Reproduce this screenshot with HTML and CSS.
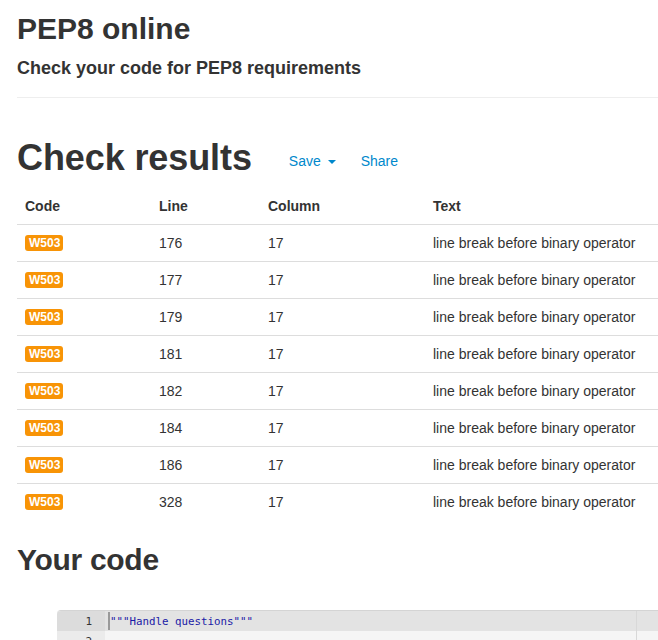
FILE: index.html
```html
<!DOCTYPE html>
<html>
<head>
<meta charset="utf-8">
<title>PEP8 online</title>
<link rel="stylesheet" href="styles.css">
</head>
<body>
<div class="page">
  <div class="page-header">
    <h1 class="title">PEP8 online</h1>
    <h2 class="subtitle">Check your code for PEP8 requirements</h2>
  </div>

  <div class="results-head">
    <h1 class="big">Check results</h1>
    <a class="action" href="#">Save <span class="caret"></span></a>
    <a class="action share" href="#">Share</a>
  </div>

  <table class="results">
    <thead>
      <tr><th class="c-code">Code</th><th class="c-line">Line</th><th class="c-col">Column</th><th>Text</th></tr>
    </thead>
    <tbody>
      <tr><td><span class="label">W503</span></td><td>176</td><td>17</td><td>line break before binary operator</td></tr>
      <tr><td><span class="label">W503</span></td><td>177</td><td>17</td><td>line break before binary operator</td></tr>
      <tr><td><span class="label">W503</span></td><td>179</td><td>17</td><td>line break before binary operator</td></tr>
      <tr><td><span class="label">W503</span></td><td>181</td><td>17</td><td>line break before binary operator</td></tr>
      <tr><td><span class="label">W503</span></td><td>182</td><td>17</td><td>line break before binary operator</td></tr>
      <tr><td><span class="label">W503</span></td><td>184</td><td>17</td><td>line break before binary operator</td></tr>
      <tr><td><span class="label">W503</span></td><td>186</td><td>17</td><td>line break before binary operator</td></tr>
      <tr><td><span class="label">W503</span></td><td>328</td><td>17</td><td>line break before binary operator</td></tr>
    </tbody>
  </table>

  <h1 class="your-code">Your code</h1>

  <div class="editor">
    <div class="ed-line active">
      <div class="gutter">1</div>
      <div class="code"><span class="cursor"></span><span class="str">"""Handle questions"""</span></div>
    </div>
    <div class="ed-line">
      <div class="gutter">2</div>
      <div class="code"></div>
    </div>
    <div class="print-margin"></div>
  </div>
</div>
</body>
</html>
```
FILE: styles.css
```css
html, body {
  margin: 0;
  padding: 0;
  overflow: hidden;
}
body {
  font-family: "Liberation Sans", Arial, sans-serif;
  font-size: 14px;
  line-height: 20px;
  color: #333;
  background: #fff;
}
.page {
  padding-left: 17px;
}
.page-header {
  padding-bottom: 19px;
  border-bottom: 1px solid #eee;
}
.title {
  margin: 12px 0 0;
  font-size: 30px;
  line-height: 33px;
  font-weight: bold;
}
.subtitle {
  margin: 13px 0 0;
  font-size: 18px;
  line-height: 20px;
  font-weight: bold;
}
.results-head {
  display: flex;
  align-items: center;
  margin-top: 40px;
}
.big {
  margin: 0;
  font-size: 36px;
  line-height: 40px;
  font-weight: bold;
  letter-spacing: -0.1px;
}
.action {
  color: #0088cc;
  text-decoration: none;
  font-size: 14px;
  margin-left: 37px;
  margin-top: 6px;
}
.action.share {
  margin-left: 25px;
}
.caret {
  display: inline-block;
  width: 0;
  height: 0;
  margin-left: 3px;
  vertical-align: middle;
  border-top: 4px solid #0088cc;
  border-left: 4px solid transparent;
  border-right: 4px solid transparent;
}
.results {
  margin-top: 10px;
  width: 100%;
  border-collapse: collapse;
  border-spacing: 0;
}
.results th, .results td {
  padding: 8px;
  line-height: 20px;
  text-align: left;
  vertical-align: top;
}
.results th {
  font-weight: bold;
  vertical-align: bottom;
}
.results td {
  border-top: 1px solid #ddd;
}
.c-code { width: 118px; }
.c-line { width: 93px; }
.c-col { width: 149px; }
.label {
  display: inline-block;
  background: #f89406;
  color: #fff;
  font-size: 12px;
  font-weight: bold;
  line-height: 16px;
  padding: 0 3px 0 4px;
  border-radius: 3px;
  vertical-align: middle;
  position: relative;
  top: -1px;
}
.your-code {
  margin: 23px 0 0;
  font-size: 30px;
  line-height: 33px;
  font-weight: bold;
  letter-spacing: -0.3px;
}
.editor {
  position: relative;
  margin: 34px 0 0 40px;
  border-top: 1px solid #d4d4d4;
  border-top-left-radius: 4px;
  overflow: hidden;
  font-family: "DejaVu Sans Mono", monospace;
  font-size: 10.8px;
}
.ed-line {
  display: flex;
  height: 20px;
  line-height: 21px;
}
.gutter {
  width: 48px;
  box-sizing: border-box;
  padding-right: 13px;
  text-align: right;
  background: #ebebeb;
  color: #333;
  font-size: 11px;
}
.code {
  flex: 1;
  background: #f5f5f5;
  position: relative;
  padding-left: 5px;
}
.active .gutter { background: #dcdcdc; }
.active .code { background: #e3e3e3; }
.str { color: #1a1aa6; }
.cursor {
  position: absolute;
  left: 3px;
  top: 1px;
  width: 2px;
  height: 18px;
  background: #999;
}
.print-margin {
  position: absolute;
  top: 0;
  bottom: 0;
  left: 579px;
  width: 1px;
  background: #d8d8d8;
}
```
